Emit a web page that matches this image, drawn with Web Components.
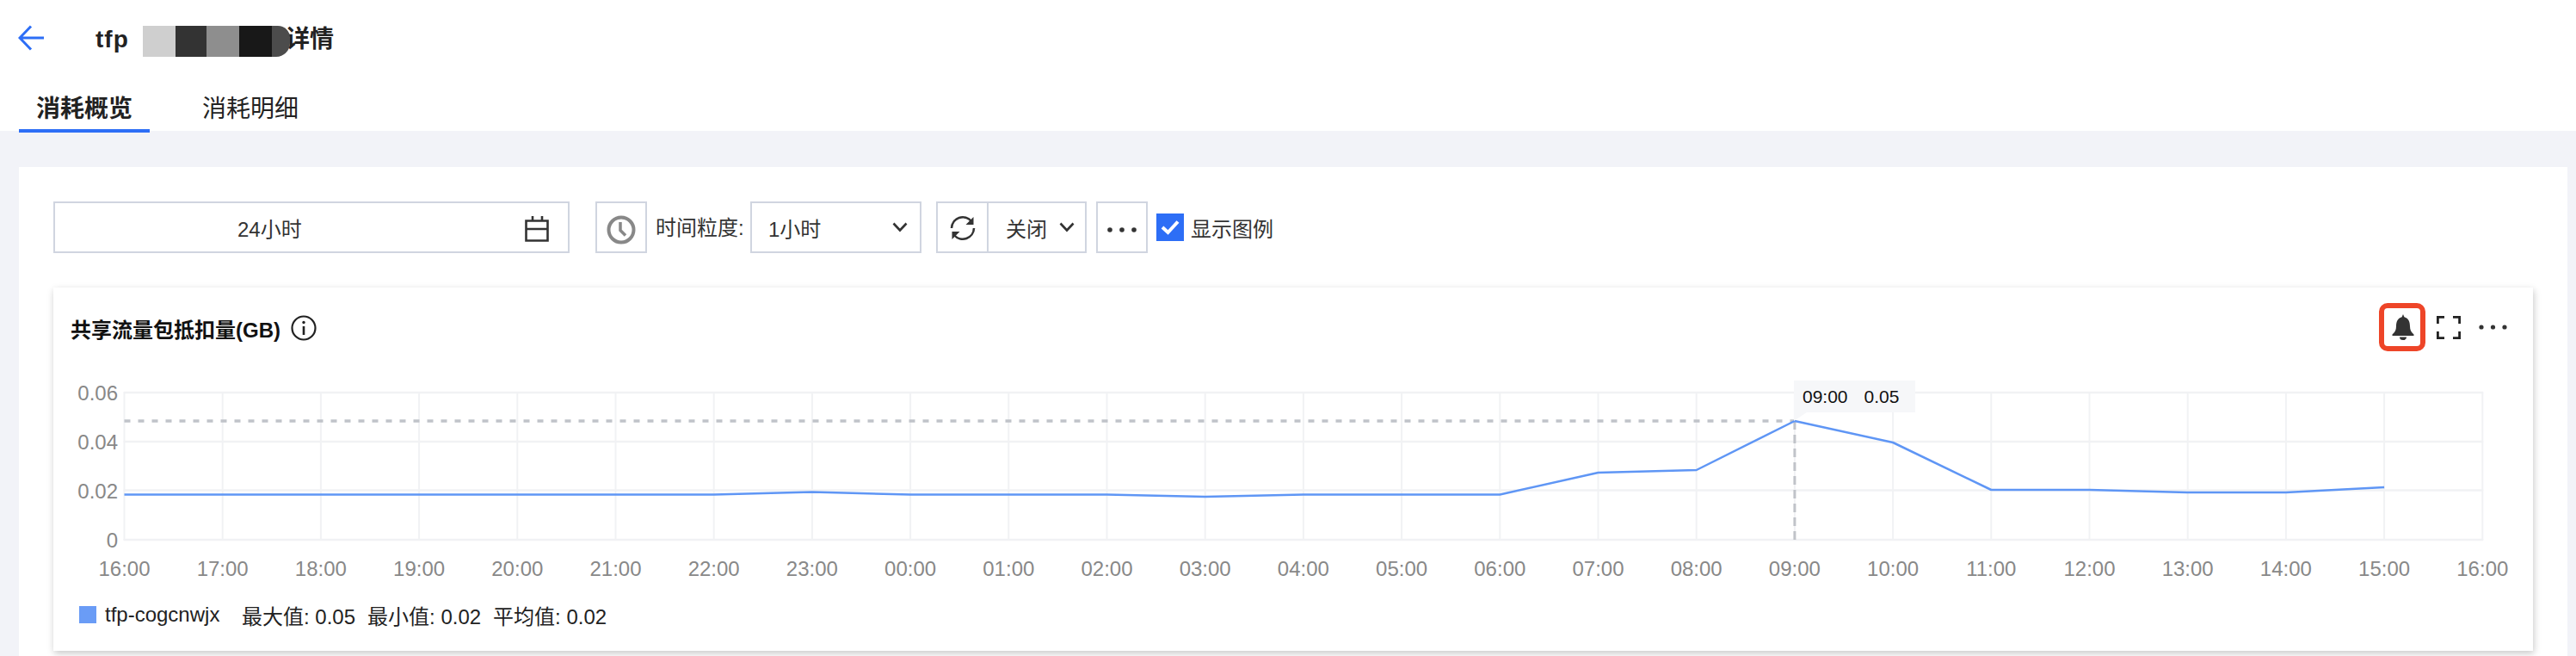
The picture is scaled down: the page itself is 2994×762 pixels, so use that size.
<!DOCTYPE html>
<html lang="zh">
<head>
<meta charset="utf-8">
<title>详情</title>
<style>
  html, body { margin: 0; height: 762px; overflow: hidden; }
  body {
    background: #f2f3f8;
    color: #222;
    font: 24px "Liberation Sans", "Noto Sans CJK SC", sans-serif;
  }
</style>
</head>
<body>
<detail-header></detail-header>
<content-panel>
  <metric-toolbar></metric-toolbar>
  <chart-card title-text="共享流量包抵扣量(GB)">
    <line-chart></line-chart>
    <chart-legend></chart-legend>
  </chart-card>
</content-panel>

<script>
// Top white header: back arrow, title with the blurred part, tabs
class detailHeader extends HTMLElement {
  constructor() {
    super();
    this.attachShadow({ mode: "open" });
  }

  connectedCallback() {
    this.shadowRoot.innerHTML = `
      <style>
        :host { display: block; height: 152px; background: #fff; box-sizing: border-box; padding-left: 22px; }
        .top { display: flex; align-items: center; height: 88px; }
        .back { width: 30px; height: 30px; display: block; margin-left: -1px; }
        .title { position: relative; display: flex; margin-left: 60px; font-size: 28px; line-height: 36px; font-weight: 700; padding-top: 4px; }
        .name { width: 39px; letter-spacing: 1px; white-space: nowrap; }
        .rest { margin-left: 182px; }
        .mask { position: absolute; left: 55px; top: 6px; height: 36px; width: 171px; display: flex; overflow: hidden; border-radius: 0 14px 16px 0; }
        .mask i { display: block; height: 100%; }
        nav { display: flex; gap: 41px; }
        .tab { height: 66px; box-sizing: border-box; margin-bottom: -2px; padding: 10px 20px 0; display: flex; align-items: center; font-size: 28px; border-bottom: 4px solid transparent; }
        .tab.on { font-weight: 700; border-bottom-color: #2d6ef6; }
      </style>
      <div class="top">
        <svg class="back" viewBox="0 0 30 30" fill="none" stroke="#2d6ef6" stroke-width="3"><path d="M30 15H2M15 1.5 2 15l13 13.5"/></svg>
        <div class="title">
          <span class="name">tfp</span><span class="rest">详情</span>
          <span class="mask">
            <i style="width:38px;background:#cfcfcf"></i><i style="width:36px;background:#333"></i><i style="width:38px;background:#8e8e8e"></i><i style="width:38px;background:#181818"></i><i style="width:21px;background:#4c4c4c"></i>
          </span>
        </div>
      </div>
      <nav>
        <div class="tab on">消耗概览</div>
        <div class="tab">消耗明细</div>
      </nav>`;
  }
}

// White panel around the toolbar and the card
class contentPanel extends HTMLElement {
  constructor() {
    super();
    this.attachShadow({ mode: "open" });
    this.shadowRoot.innerHTML = `
      <style>
        :host { display: block; margin: 42px 10px 0 22px; padding: 40px 40px 0; height: 568px; box-sizing: border-box; background: #fff; }
      </style>
      <slot></slot>`;
  }
}

// Row of filters above the chart
class metricToolbar extends HTMLElement {
  constructor() {
    super();
    this.attachShadow({ mode: "open" });
  }

  connectedCallback() {
    const chevron = `<svg class="chev" viewBox="0 0 18 12" fill="none" stroke="#333" stroke-width="2.6"><path d="M1.5 1.5 9 9.5l7.5-8"/></svg>`;
    this.shadowRoot.innerHTML = `
      <style>
        :host { display: flex; align-items: center; height: 60px; color: #333; }
        .box { box-sizing: border-box; height: 60px; border: 2px solid #d0d5e0; display: flex; align-items: center; background: #fff; flex: none; }
        .date { width: 600px; position: relative; padding-left: 212px; }
        .date svg { position: absolute; left: 546px; top: 15px; width: 28px; height: 30px; }
        .clock { width: 60px; margin-left: 30px; justify-content: center; }
        .clock svg { width: 34px; height: 34px; margin-top: 5px; }
        .label { margin-left: 10px; width: 110px; margin-top: -3px; flex: none; }
        .select { width: 199px; padding-left: 19px; justify-content: space-between; padding-right: 14px; }
        .chev { width: 18px; height: 12px; display: block; }
        .group { margin-left: 17px; width: 175px; }
        .refresh { width: 59px; height: 100%; display: flex; align-items: center; justify-content: center; border-right: 2px solid #d0d5e0; box-sizing: border-box; }
        .refresh svg { width: 30px; height: 30px; margin-top: 1px; }
        .off { padding-left: 20px; display: flex; align-items: center; gap: 14px; }
        .more { width: 60px; margin-left: 11px; justify-content: center; }
        .more svg { width: 36px; height: 8px; margin-top: 5px; }
        .check { width: 32px; height: 32px; background: #2d6ef6; margin-left: 10px; flex: none; display: flex; align-items: center; justify-content: center; }
        .check svg { width: 22px; height: 18px; }
        .show { margin-left: 8px; }
      </style>
      <div class="box date">24小时
        <svg viewBox="0 0 28 30" fill="none" stroke="#333" stroke-width="2.6"><path d="M1.5 5.5h25v23h-25zM1.5 15h25M9 0v6M20 0v6"/></svg>
      </div>
      <div class="box clock">
        <svg viewBox="0 0 34 34" fill="none" stroke="#888" stroke-width="4"><circle cx="17" cy="17" r="14.5"/><path d="M16 8v9.500l6 6" stroke-width="3.500"/></svg>
      </div>
      <span class="label">时间粒度:</span>
      <div class="box select"><span>1小时</span>${chevron}</div>
      <div class="box group">
        <div class="refresh">
          <svg viewBox="0 0 30 30" fill="none" stroke="#333" stroke-width="2.600"><path d="M2 15A13 13 0 0 1 25 7M28 15A13 13 0 0 1 5 23"/><path d="M27.500 2v9h-9zM2.500 28v-9h9z" fill="#333" stroke="none"/></svg>
        </div>
        <div class="off"><span>关闭</span>${chevron}</div>
      </div>
      <div class="box more">
        <svg viewBox="0 0 36 8" fill="#333"><circle cx="4" cy="4" r="2.800"/><circle cx="18" cy="4" r="2.800"/><circle cx="32" cy="4" r="2.800"/></svg>
      </div>
      <div class="check">
        <svg viewBox="0 0 22 18" fill="none" stroke="#fff" stroke-width="4"><path d="M2 9l6.500 6L20 2.500"/></svg>
      </div>
      <span class="show">显示图例</span>`;
  }
}

// Card with the title row; the chart and the legend are slotted
class chartCard extends HTMLElement {
  constructor() {
    super();
    this.attachShadow({ mode: "open" });
  }

  connectedCallback() {
    this.shadowRoot.innerHTML = `
      <style>
        :host { display: block; margin-top: 40px; height: 422px; background: #fff; box-shadow: 1px 3px 8px rgba(0,0,0,.22); }
        header { display: flex; align-items: center; height: 96px; padding: 0 30px 0 20px; }
        h3 { margin: -2px 0 0; font-size: 24px; font-weight: 700; color: #111; }
        .info { width: 30px; height: 30px; margin-left: 12px; margin-top: -2px; }
        .tools { margin-left: auto; display: flex; align-items: center; margin-top: -4px; }
        .alarm { width: 54px; height: 56px; box-sizing: border-box; border: 6px solid #ee4528; border-radius: 10px; display: flex; align-items: center; justify-content: center; }
        .alarm svg { width: 28px; height: 30px; margin-left: 2px; }
        .full { width: 28px; height: 27px; margin-left: 13px; }
        .dots { width: 33px; height: 8px; margin-left: 21px; }
      </style>
      <header>
        <h3>${this.getAttribute("title-text")}</h3>
        <svg class="info" viewBox="0 0 30 30" fill="none" stroke="#222" stroke-width="2.200"><circle cx="15" cy="15" r="13.500"/><path d="M15 13v10" stroke-width="2.600"/><circle cx="15" cy="8.500" r="1.700" fill="#222" stroke="none"/></svg>
        <div class="tools">
          <div class="alarm">
            <svg viewBox="0 0 26 30" fill="#333"><path d="M13 0l1.400 3.200C19.500 4.500 21 9 21 14c0 4.500 1.500 7 4.500 9.500V25H.5v-1.500C3.500 21 5 18.500 5 14 5 9 6.500 4.500 11.600 3.200zM9 26.500h8a4 3.500 0 0 1-8 0z"/></svg>
          </div>
          <svg class="full" viewBox="0 0 28 27" fill="none" stroke="#222" stroke-width="2.800"><path d="M9 1.400H1.400V9M19 1.400h7.600V9M9 25.600H1.400V18M19 25.600h7.600V18"/></svg>
          <svg class="dots" viewBox="0 0 33 8" fill="#333"><circle cx="3" cy="4" r="2.600"/><circle cx="16.500" cy="4" r="2.600"/><circle cx="30" cy="4" r="2.600"/></svg>
        </div>
      </header>
      <slot></slot>`;
  }
}

// The plot: drawn from the hour list and the series values
class lineChart extends HTMLElement {
  constructor() {
    super();
    this.attachShadow({ mode: "open" });
  }

  connectedCallback() {
    const hours = ["16:00","17:00","18:00","19:00","20:00","21:00","22:00","23:00","00:00","01:00","02:00","03:00","04:00","05:00","06:00","07:00","08:00","09:00","10:00","11:00","12:00","13:00","14:00","15:00","16:00"];
    // y of each hour, in px inside the svg
    const series = [144.500,144.500,144.500,144.500,144.500,144.500,144.500,141.500,144.500,144.500,144.500,147,144.500,144.500,144.500,119,116,59,84,139,139,142,142,136];
    const left = 82.500, step = 114.200;
    const x = (i) => left + i * step;
    const right = x(24);

    let grid = "";
    hours.forEach((h, i) => {
      grid += `<line x1="${x(i)}" x2="${x(i)}" y1="26" y2="197" stroke="#f1f2f4" stroke-width="2"/>`;
    });
    const yTicks = [["0.06", 26], ["0.04", 83], ["0.02", 139.500], ["0", 197]];
    yTicks.forEach(([t, y]) => {
      grid += `<line x1="${left - 1}" x2="${right + 1}" y1="${y}" y2="${y}" stroke="#f1f2f4" stroke-width="2.500"/>`;
    });

    const labelsY = yTicks.map(([t, y]) => `<text x="75" y="${y + 9}" text-anchor="end">${t}</text>`).join("");
    const labelsX = hours.map((h, i) => `<text x="${x(i)}" y="239" text-anchor="middle">${h}</text>`).join("");
    const points = series.map((y, i) => `${x(i)},${y}`).join(" ");

    this.shadowRoot.innerHTML = `
      <style>
        :host { display: block; position: relative; height: 250px; }
        svg { display: block; }
        text { font: 24px "Liberation Sans", "Noto Sans CJK SC", sans-serif; fill: #888; }
        .tip { position: absolute; left: 2023px; top: 12px; width: 141px; height: 37px; box-sizing: border-box; background: #f6f7f9; display: flex; align-items: center; padding-left: 10px; gap: 19px; font-size: 21px; color: #111; }
        .tip::after { content: ""; position: absolute; left: 0; top: 37px; width: 15px; height: 10px; background: #f6f7f9; clip-path: polygon(0 0, 100% 0, 0 100%); }
      </style>
      <svg width="2882" height="250" viewBox="0 0 2882 250">
        ${grid}
        <line x1="${left}" x2="${x(17)}" y1="59" y2="59" stroke="#c0c3c9" stroke-width="3.500" stroke-dasharray="7 9"/>
        <line x1="${x(17)}" x2="${x(17)}" y1="59" y2="197" stroke="#c0c3c9" stroke-width="3" stroke-dasharray="10 6"/>
        <polyline points="${points}" fill="none" stroke="#5f96f5" stroke-width="2.500" stroke-linejoin="round"/>
        ${labelsY}
        ${labelsX}
      </svg>
      <div class="tip"><span>09:00</span><span>0.05</span></div>`;
  }
}

class chartLegend extends HTMLElement {
  constructor() {
    super();
    this.attachShadow({ mode: "open" });
    this.shadowRoot.innerHTML = `
      <style>
        :host { display: flex; align-items: center; gap: 14px; padding: 20px 0 0 30px; height: 28px; font-size: 24px; color: #222; white-space: nowrap; }
        .mark { width: 20px; height: 20px; background: #6a9cf6; margin-right: -4px; }
        .name { width: 145px; }
      </style>
      <span class="mark"></span>
      <span class="name">tfp-cogcnwjx</span>
      <span>最大值: 0.05</span>
      <span>最小值: 0.02</span>
      <span>平均值: 0.02</span>`;
  }
}

customElements.define("detail-header", detailHeader);
customElements.define("content-panel", contentPanel);
customElements.define("metric-toolbar", metricToolbar);
customElements.define("chart-card", chartCard);
customElements.define("line-chart", lineChart);
customElements.define("chart-legend", chartLegend);
</script>
</body>
</html>
